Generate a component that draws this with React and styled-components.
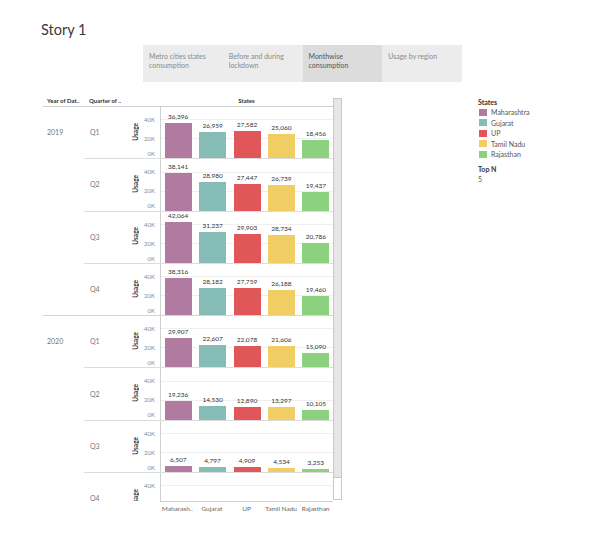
import React from "react";
import styled, { createGlobalStyle } from "styled-components";

const GlobalStyle = createGlobalStyle`
  html, body {
    margin: 0;
    padding: 0;
    background: #fff;
  }
  body {
    font-family: Lato, "Open Sans", "Liberation Sans", sans-serif;
  }
`;

const STATES = [
    { name: "Maharashtra", short: "Maharash..", color: "#b07aa1" },
    { name: "Gujarat", color: "#86bcb6" },
    { name: "UP", color: "#e15759" },
    { name: "Tamil Nadu", color: "#f1ce63" },
    { name: "Rajasthan", color: "#8cd17d" },
];

const DATA = [
    {
        year: "2019",
        quarters: [
            { q: "Q1", v: [36396, 26959, 27582, 25060, 18456] },
            { q: "Q2", v: [38141, 28980, 27447, 26739, 19437] },
            { q: "Q3", v: [42064, 31237, 29903, 28734, 20786] },
            { q: "Q4", v: [38316, 28182, 27759, 26188, 19460] },
        ],
    },
    {
        year: "2020",
        quarters: [
            { q: "Q1", v: [29907, 22607, 22078, 21606, 15090] },
            { q: "Q2", v: [19236, 14530, 12890, 13297, 10105] },
            { q: "Q3", v: [6507, 4797, 4909, 4534, 3253] },
            { q: "Q4", v: null },
        ],
    },
];

const TABS = [
    "Metro cities states consumption",
    "Before and during lockdown",
    "Monthwise consumption",
    "Usage by region",
];

const ROW_H = 52.3;
const PX_PER_K = 0.975;

const Page = styled.div`
    width: 603px;
    height: 538px;
    overflow: hidden;
`;

const Title = styled.h1`
    margin: 20px 0 0 41px;
    font-size: 14.5px;
    line-height: 20px;
    font-weight: 400;
    color: #3a3a3a;
`;

const TabStrip = styled.div`
    display: flex;
    margin: 5px 0 0 143px;
    width: 319px;
    height: 37px;
    background: #ececec;
`;

const Tab = styled.div`
    width: 80px;
    box-sizing: border-box;
    padding: 7px 16px 0 6px;
    font-size: 7px;
    line-height: 8.5px;
    color: ${(p) => (p.$active ? "#555" : "#8a8a8a")};
    background: ${(p) => (p.$active ? "#dcdcdc" : "transparent")};
`;

const Content = styled.div`
    display: flex;
    align-items: flex-start;
    margin-top: 14px;
`;

const Sheet = styled.div`
    display: flex;
    margin-left: 43px;
`;

const SheetMain = styled.div`
    width: 290px;
    display: flex;
    flex-direction: column;
`;

const HeaderRow = styled.div`
    display: grid;
    grid-template-columns: 41px 46px 30px 173px;
    height: 10px;
    border-bottom: 1px solid #d0d0d0;
    font-size: 6px;
    line-height: 10px;
    font-weight: 700;
    color: #333;
`;

const HeaderCell = styled.div`
    padding-left: ${(p) => p.$pad || 0}px;
    text-align: ${(p) => p.$align || "left"};
    white-space: nowrap;
`;

const ScrollBody = styled.div`
    height: 394px;
    overflow: hidden;
`;

const YearGroup = styled.div`
    display: flex;
    border-bottom: 1px solid #d4d4d4;
`;

const YearCell = styled.div`
    width: 41px;
    flex-shrink: 0;
    box-sizing: border-box;
    padding: 21px 0 0 4px;
    font-size: 7px;
    line-height: 8px;
    color: #777;
`;

const Quarters = styled.div`
    flex: 1;
    display: flex;
    flex-direction: column;
`;

const QuarterRow = styled.div`
    display: flex;
    flex-shrink: 0;
    box-sizing: border-box;
    height: ${(p) => (p.$last ? ROW_H - 1 : ROW_H)}px;
    border-bottom: ${(p) => (p.$last ? "none" : "1px solid #dcdcdc")};
`;

const QuarterLabel = styled.div`
    width: 46px;
    box-sizing: border-box;
    padding: 0 0 1px 6px;
    display: flex;
    align-items: center;
    font-size: 7px;
    color: #777;
`;

const Axis = styled.div`
    width: 30px;
    display: flex;
`;

const UsageLabel = styled.div`
    writing-mode: vertical-rl;
    transform: rotate(180deg);
    align-self: center;
    width: 8px;
    margin: 0 0 2px 2px;
    font-size: 6.5px;
    font-weight: 700;
    color: #333;
    text-align: center;
`;

const Ticks = styled.div`
    flex: 1;
    display: flex;
    flex-direction: column;
    align-items: flex-end;
    padding-right: 5px;
`;

const Tick = styled.div`
    margin-top: ${(p) => p.$gap}px;
    font-size: 6px;
    line-height: 8px;
    color: #8a8a8a;
`;

const Pane = styled.div`
    width: 173px;
    box-sizing: border-box;
    display: flex;
    align-items: stretch;
    border-left: 1px solid #d0d0d0;
    background:
        linear-gradient(#efefef, #efefef) 0 calc(100% - 38px) / 100% 1px no-repeat,
        linear-gradient(#efefef, #efefef) 0 calc(100% - 19px) / 100% 1px no-repeat;
`;

const Column = styled.div`
    flex: 1;
    display: flex;
    flex-direction: column;
    align-items: center;
    justify-content: flex-end;
`;

const Value = styled.div`
    margin-bottom: 2px;
    font-size: 6.5px;
    line-height: 8px;
    color: #333;
`;

const Bar = styled.div`
    width: 27px;
    background: ${(p) => p.$color};
`;

const BottomAxis = styled.div`
    display: flex;
    padding-left: 117px;
`;

const AxisLabels = styled.div`
    width: 173px;
    display: flex;
    border-top: 1px solid #d0d0d0;
`;

const AxisLabel = styled.div`
    flex: 1;
    padding-top: 3px;
    text-align: center;
    white-space: nowrap;
    font-size: 6.5px;
    line-height: 8px;
    color: #666;
`;

const Scrollbar = styled.div`
    width: 9px;
    height: 402px;
    margin-top: 2px;
    box-sizing: border-box;
    border: 1px solid #c8c8c8;
    background: #fff;
`;

const Thumb = styled.div`
    height: 378px;
    background: #e6e6e6;
    border-bottom: 1px solid #c8c8c8;
`;

const Legend = styled.div`
    margin: 1px 0 0 136px;
    width: 90px;
`;

const LegendTitle = styled.div`
    margin-top: ${(p) => p.$gap || 0}px;
    font-size: 7px;
    line-height: 10px;
    font-weight: 700;
    color: #333;
`;

const LegendItem = styled.div`
    display: flex;
    align-items: center;
    gap: 4px;
    height: 10.5px;
    font-size: 7px;
    color: #555;
`;

const Swatch = styled.span`
    width: 8px;
    height: 7px;
    margin-left: 1px;
    background: ${(p) => p.$color};
`;

const LegendValue = styled.div`
    font-size: 7px;
    line-height: 10px;
    color: #555;
`;

const fmt = (n) => n.toLocaleString("en-US");

const AxisTicks = () => (
    <Axis>
        <UsageLabel>Usage</UsageLabel>
        <Ticks>
            <Tick $gap={9}>40K</Tick>
            <Tick $gap={11}>20K</Tick>
            <Tick $gap={7}>0K</Tick>
        </Ticks>
    </Axis>
);

const App = () => {
    return (
        <Page>
            <GlobalStyle />
            <Title>Story 1</Title>
            <TabStrip>
                {TABS.map((t, i) => (
                    <Tab key={t} $active={i === 2}>
                        {t}
                    </Tab>
                ))}
            </TabStrip>
            <Content>
                <Sheet>
                    <SheetMain>
                        <HeaderRow>
                            <HeaderCell $pad={4}>Year of Dat..</HeaderCell>
                            <HeaderCell $pad={5}>Quarter of ..</HeaderCell>
                            <HeaderCell />
                            <HeaderCell $align="center">States</HeaderCell>
                        </HeaderRow>
                        <ScrollBody>
                            {DATA.map((group) => (
                                <YearGroup key={group.year}>
                                    <YearCell>{group.year}</YearCell>
                                    <Quarters>
                                        {group.quarters.map((row, i) => (
                                            <QuarterRow
                                                key={row.q}
                                                $last={
                                                    i ===
                                                    group.quarters.length - 1
                                                }
                                            >
                                                <QuarterLabel>{row.q}</QuarterLabel>
                                                <AxisTicks />
                                                <Pane>
                                                    {STATES.map((s, j) => (
                                                        <Column key={s.name}>
                                                            {row.v && (
                                                                <>
                                                                    <Value>
                                                                        {fmt(row.v[j])}
                                                                    </Value>
                                                                    <Bar
                                                                        $color={s.color}
                                                                        style={{
                                                                            height: `${
                                                                                (row.v[j] / 1000) *
                                                                                PX_PER_K
                                                                            }px`,
                                                                        }}
                                                                    />
                                                                </>
                                                            )}
                                                        </Column>
                                                    ))}
                                                </Pane>
                                            </QuarterRow>
                                        ))}
                                    </Quarters>
                                </YearGroup>
                            ))}
                        </ScrollBody>
                        <BottomAxis>
                            <AxisLabels>
                                {STATES.map((s) => (
                                    <AxisLabel key={s.name}>
                                        {s.short || s.name}
                                    </AxisLabel>
                                ))}
                            </AxisLabels>
                        </BottomAxis>
                    </SheetMain>
                    <Scrollbar>
                        <Thumb />
                    </Scrollbar>
                </Sheet>
                <Legend>
                    <LegendTitle>States</LegendTitle>
                    {STATES.map((s) => (
                        <LegendItem key={s.name}>
                            <Swatch $color={s.color} />
                            {s.name}
                        </LegendItem>
                    ))}
                    <LegendTitle $gap={4.5}>Top N</LegendTitle>
                    <LegendValue>5</LegendValue>
                </Legend>
            </Content>
        </Page>
    );
};

export default App;
